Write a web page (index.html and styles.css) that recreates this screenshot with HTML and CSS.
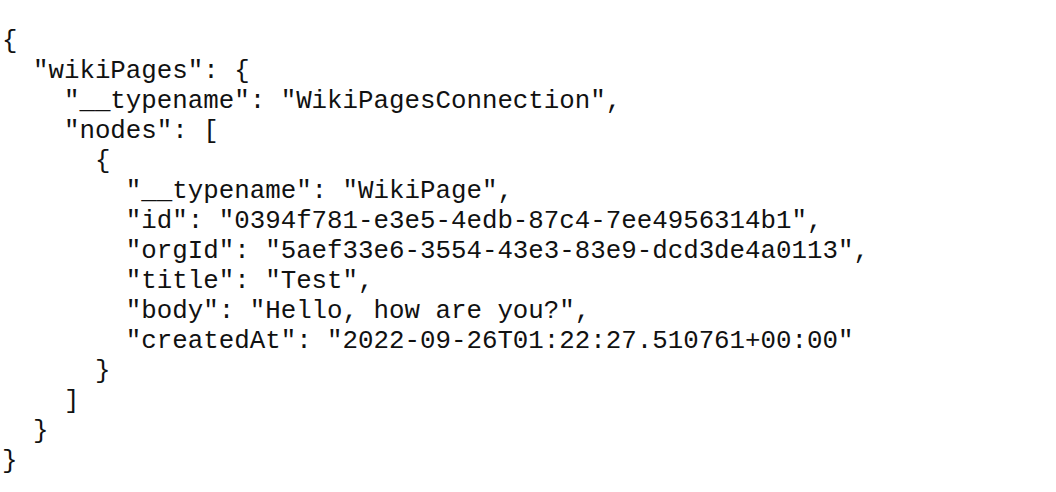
FILE: index.html
```html
<!DOCTYPE html>
<html>
<head>
<meta charset="utf-8">
<link rel="stylesheet" href="styles.css">
</head>
<body>
<pre class="json">{
  "wikiPages": {
    "__typename": "WikiPagesConnection",
    "nodes": [
      {
        "__typename": "WikiPage",
        "id": "0394f781-e3e5-4edb-87c4-7ee4956314b1",
        "orgId": "5aef33e6-3554-43e3-83e9-dcd3de4a0113",
        "title": "Test",
        "body": "Hello, how are you?",
        "createdAt": "2022-09-26T01:22:27.510761+00:00"
      }
    ]
  }
}</pre>
</body>
</html>
```
FILE: styles.css
```css
html, body {
  margin: 0;
  padding: 0;
  background: #ffffff;
}
.json {
  margin: 0;
  padding: 27px 0 0 2px;
  font-family: "Liberation Mono", "Courier New", monospace;
  font-size: 25.8px;
  line-height: 30px;
  color: #111111;
}
```
